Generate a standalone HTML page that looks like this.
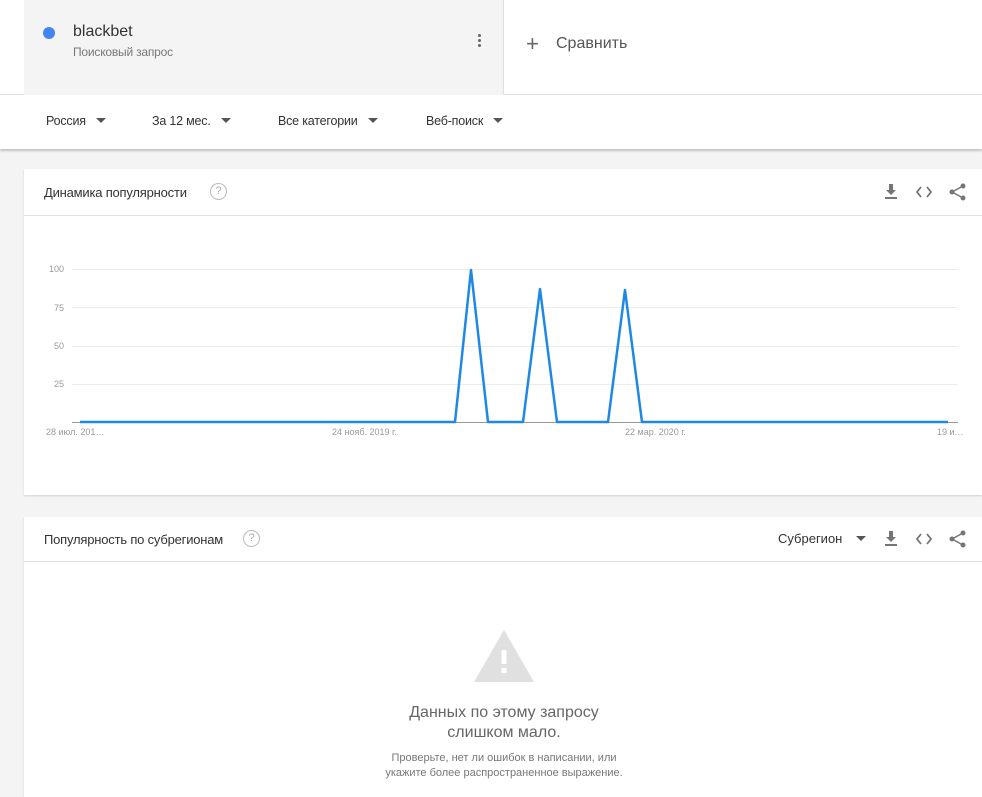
<!DOCTYPE html>
<html><head><meta charset="utf-8"><style>
*{margin:0;padding:0;box-sizing:border-box}
body{width:982px;height:788px;background:#f4f4f4;position:relative;overflow:hidden;font-family:"Liberation Sans",sans-serif;color:#333}
.a{position:absolute;white-space:nowrap}
.top{position:absolute;left:0;top:0;width:982px;height:95px;background:#fff;border-bottom:1px solid #e0e0e0}
.term{position:absolute;left:24px;top:0;width:480px;height:95px;background:#f4f4f4;border-right:1px solid #e0e0e0}
.bar{position:absolute;left:0;top:95px;width:982px;height:54px;background:#fff;box-shadow:0 2px 2px rgba(0,0,0,.2)}
.f{font-size:12.5px;color:#333;letter-spacing:-.2px}
.tri{display:inline-block;width:0;height:0;border-left:5px solid transparent;border-right:5px solid transparent;border-top:5px solid #555;margin-left:10px;vertical-align:2px}
.card{position:absolute;left:24px;width:958px;background:#fff;box-shadow:0 1px 2px rgba(0,0,0,.15)}
.hd{position:absolute;left:0;width:958px;border-bottom:1px solid #e0e0e0}
.ttl{font-size:13px;color:#333;letter-spacing:-.2px}
.q{position:absolute;top:-1px;width:17px;height:17px;border:1.5px solid #bbb;border-radius:50%;color:#aaa;font-size:11px;text-align:center;line-height:14px}
</style></head><body>
<div class="top"></div>
<div class="term"></div>
<div class="a" style="left:43px;top:27px;width:12px;height:12px;border-radius:50%;background:#4285f4"></div>
<div class="a" style="left:73px;top:23px;font-size:16px;color:#333">blackbet</div>
<div class="a" style="left:73px;top:45px;font-size:12px;color:#777;letter-spacing:-.2px">Поисковый запрос</div>
<div class="a" style="left:478px;top:34px;width:3px;height:3px;background:#666;border-radius:50%;box-shadow:0 5px 0 #666,0 10px 0 #666"></div>
<div class="a" style="left:526px;top:31px;font-size:22px;color:#666;font-weight:300">+</div>
<div class="a" style="left:556px;top:35px;font-size:16px;color:#555">Сравнить</div>
<div class="bar"></div>
<div class="a f" style="left:46px;top:114px">Россия<span class="tri"></span></div>
<div class="a f" style="left:152px;top:114px">За 12 мес.<span class="tri"></span></div>
<div class="a f" style="left:278px;top:114px">Все категории<span class="tri"></span></div>
<div class="a f" style="left:426px;top:114px">Веб-поиск<span class="tri"></span></div>

<div class="card" style="top:169px;height:326px">
<div class="hd" style="top:0;height:47px"></div>
<div class="a ttl" style="left:20px;top:16px">Динамика популярности</div>
<div class="q" style="left:186px;top:14px">?</div>
</div>
<div class="card" style="top:517px;height:280px">
<div class="hd" style="top:0;height:45px"></div>
<div class="a ttl" style="left:20px;top:15px">Популярность по субрегионам</div>
<div class="q" style="left:219px;top:13px">?</div>
<div class="a" style="left:754px;top:14px;font-size:13px;color:#333">Субрегион<span class="tri" style="margin-left:14px"></span></div>
</div>

<svg class="a" style="left:880px;top:180px" width="90" height="24" viewBox="0 0 90 24">
<g fill="#757575"><path d="M9 4h4v6h3l-5 5-5-5h3z"/><rect x="5" y="17" width="12" height="2"/></g>
<path d="M41 7l-4 5 4 5M47 7l4 5-4 5" stroke="#757575" stroke-width="1.8" fill="none"/>
<g fill="#757575"><circle cx="83" cy="6" r="2.5"/><circle cx="72" cy="12" r="2.5"/><circle cx="83" cy="18" r="2.5"/></g>
<path d="M83 6L72 12L83 18" stroke="#757575" stroke-width="1.5" fill="none"/>
</svg>
<svg class="a" style="left:880px;top:527px" width="90" height="24" viewBox="0 0 90 24">
<g fill="#757575"><path d="M9 4h4v6h3l-5 5-5-5h3z"/><rect x="5" y="17" width="12" height="2"/></g>
<path d="M41 7l-4 5 4 5M47 7l4 5-4 5" stroke="#757575" stroke-width="1.8" fill="none"/>
<g fill="#757575"><circle cx="83" cy="6" r="2.5"/><circle cx="72" cy="12" r="2.5"/><circle cx="83" cy="18" r="2.5"/></g>
<path d="M83 6L72 12L83 18" stroke="#757575" stroke-width="1.5" fill="none"/>
</svg>

<svg class="a" style="left:0;top:0" width="982" height="500">
<g stroke="#ececec" stroke-width="1"><line x1="72" y1="269.5" x2="958" y2="269.5"/><line x1="72" y1="307.5" x2="958" y2="307.5"/><line x1="72" y1="346.5" x2="958" y2="346.5"/><line x1="72" y1="384.5" x2="958" y2="384.5"/></g>
<line x1="72" y1="422.5" x2="958" y2="422.5" stroke="#999"/>
<polyline points="80,422 455,422 471,270 488,422 523,422 540,289 557,422 608,422 625,290 642,422 948,422" fill="none" stroke="#1e88e5" stroke-width="2.5" stroke-linejoin="round"/>
<g font-family="Liberation Sans,sans-serif" font-size="9" fill="#999">
<text x="64" y="272" text-anchor="end">100</text><text x="64" y="311" text-anchor="end">75</text><text x="64" y="349" text-anchor="end">50</text><text x="64" y="387" text-anchor="end">25</text>
<text x="46" y="435">28 июл. 201…</text><text x="332" y="435">24 нояб. 2019 г.</text><text x="625" y="435">22 мар. 2020 г.</text><text x="937" y="435">19 и…</text>
</g>
</svg>

<svg class="a" style="left:472px;top:628px" width="64" height="56" viewBox="0 0 64 56"><path d="M32 2L62 54H2z" fill="#e0e0e0"/><rect x="29.5" y="22" width="5" height="14" fill="#fff"/><rect x="29.5" y="40" width="5" height="5" fill="#fff"/></svg>
<div class="a" style="left:0;width:1008px;top:703px;text-align:center;font-size:16px;color:#666;line-height:20px">Данных по этому запросу<br>слишком мало.</div>
<div class="a" style="left:0;width:1008px;top:751px;text-align:center;font-size:11px;color:#777;line-height:15px">Проверьте, нет ли ошибок в написании, или<br>укажите более распространенное выражение.</div>
</body></html>
